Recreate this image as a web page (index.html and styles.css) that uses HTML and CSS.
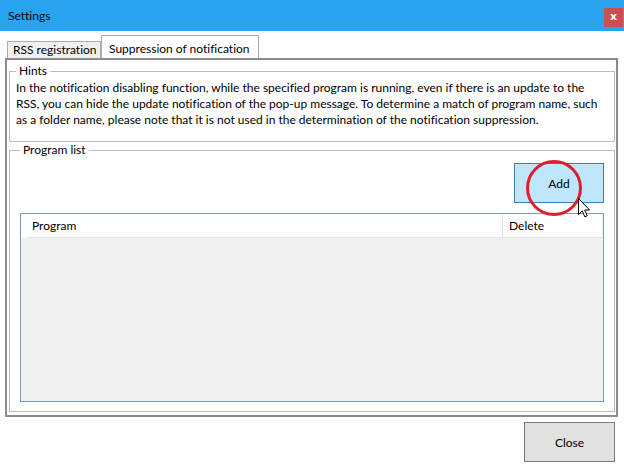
FILE: index.html
```html
<!DOCTYPE html>
<html>
<head>
<meta charset="utf-8">
<link rel="stylesheet" href="styles.css">
</head>
<body>
<div class="window">
  <div class="titlebar">
    <span class="title">Settings</span>
    <span class="xbtn">x</span>
  </div>
  <div class="tabs">
    <div class="tab">RSS registration</div>
    <div class="tab active">Suppression of notification</div>
  </div>
  <div class="panel">
    <fieldset class="group hints">
      <legend>Hints</legend>
      <p class="hint-text">In the notification disabling function, while the specified program is running, even if there is an update to the<br>RSS, you can hide the update notification of the pop-up message. To determine a match of program name, such<br>as a folder name, please note that it is not used in the determination of the notification suppression.</p>
    </fieldset>
    <fieldset class="group programs">
      <legend>Program list</legend>
      <div class="add-row">
        <div class="add-wrap">
          <button class="btn add">Add</button>
          <span class="ring"></span>
          <svg class="cursor" width="13" height="20" viewBox="0 0 13 20"><path d="M0.5 0.5 L0.5 16.5 L4.2 12.9 L6.8 18.8 L9.2 17.8 L6.7 12 L11.6 12 Z" fill="#fff" stroke="#000" stroke-width="1" stroke-linejoin="miter"/></svg>
        </div>
      </div>
      <div class="list">
        <div class="list-head">
          <span class="lead"></span>
          <span class="col col-prog">Program</span>
          <span class="col col-del">Delete</span>
        </div>
        <div class="list-body"></div>
      </div>
    </fieldset>
  </div>
  <div class="footer">
    <button class="btn close">Close</button>
  </div>
</div>
</body>
</html>
```
FILE: styles.css
```css
html, body {
  margin: 0;
  padding: 0;
  background: #fff;
}
body {
  width: 624px;
  height: 472px;
  overflow: hidden;
  font-family: "Lato", "Noto Sans", sans-serif;
  font-size: 12px;
  line-height: 16px;
  color: #000;
  font-variant-ligatures: none;
}
.window {
  width: 624px;
  height: 472px;
  display: flex;
  flex-direction: column;
}
.titlebar {
  height: 31px;
  background: #27a3f0;
  display: flex;
  align-items: center;
  justify-content: space-between;
  padding: 0 1px 0 8px;
  box-sizing: border-box;
}
.title {
  font-size: 12px;
  margin-top: 1px;
}
.xbtn {
  width: 19px;
  height: 19px;
  background: #c75050;
  color: #fff;
  font-weight: bold;
  font-size: 11px;
  line-height: 17px;
  text-align: center;
  font-family: "DejaVu Sans", sans-serif;
  margin-top: 3px;
}
.tabs {
  height: 27px;
  display: flex;
  align-items: flex-end;
  padding-left: 7px;
}
.tab {
  height: 17px;
  width: 94px;
  box-sizing: border-box;
  border: 1px solid #acacac;
  border-bottom: none;
  background: #f0f0f0;
  padding: 0 0 0 5px;
  line-height: 16px;
  white-space: nowrap;
}
.tab.active {
  width: 158px;
  height: 23px;
  background: #fff;
  padding: 5px 0 0 7px;
}
.panel {
  margin: 0 6px 0 5px;
  border: 2px solid #898c95;
  height: 359px;
  box-sizing: border-box;
  padding: 3px 1px 3px 2px;
  display: flex;
  flex-direction: column;
}
.group {
  margin: 0;
  min-width: 0;
  border: 1px solid #bcbcbc;
}
.group legend {
  padding: 0 3px;
  margin-left: 0;
  line-height: 16px;
}
.hints {
  padding: 1px 6px 13px 6px;
}
.hint-text {
  margin: 0;
  white-space: nowrap;
}
.programs {
  flex: 1;
  padding: 0 10px 9px 10px;
}
.add-row {
  display: flex;
  justify-content: flex-end;
  margin-top: 5px;
}
.add-wrap {
  position: relative;
}
.btn {
  font-family: inherit;
  font-size: 12px;
  color: #000;
  box-sizing: border-box;
  margin: 0;
  padding: 0;
}
.add {
  width: 90px;
  height: 40px;
  background: #bee6fd;
  border: 1px solid #3c7fb1;
  display: block;
}
.ring {
  position: absolute;
  left: 12px;
  top: -3px;
  width: 56px;
  height: 56px;
  box-sizing: border-box;
  border: 3px solid #dc1f2b;
  border-radius: 50%;
}
.cursor {
  position: absolute;
  left: 64px;
  top: 35px;
}
.list {
  margin-top: 10px;
  height: 189px;
  box-sizing: border-box;
  border: 1px solid #7f9db9;
  display: flex;
  flex-direction: column;
  background: #f0f0f0;
}
.list-head {
  height: 24px;
  background: #fff;
  display: flex;
  margin-right: 1px;
}
.lead {
  width: 6px;
}
.col {
  border-bottom: 1px solid #e5e5e5;
  line-height: 23px;
  box-sizing: border-box;
}
.col-prog {
  width: 476px;
  padding-left: 5px;
  border-right: 1px solid #e5e5e5;
}
.col-del {
  flex: 1;
  padding-left: 6px;
}
.list-body {
  flex: 1;
}
.footer {
  display: flex;
  justify-content: flex-end;
  padding: 5px 9px 0 0;
}
.close {
  width: 91px;
  height: 40px;
  background: #e1e1e1;
  border: 1px solid #7a7a7a;
}
```
